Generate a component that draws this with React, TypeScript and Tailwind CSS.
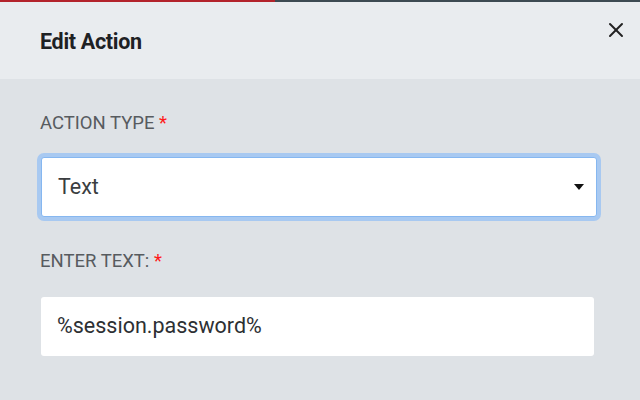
import { X } from "lucide-react";

const Label = ({ text }: { text: string }) => (
  <div className="h-6 text-[18.5px] leading-6 text-[#575b5f]">
    {text} <span className="text-[#ff1a1a]">*</span>
  </div>
);

export default function App() {
  return (
    <div
      className="w-[640px] h-[400px] overflow-hidden bg-[#dee2e6]"
      style={{ fontFamily: "Roboto, 'Noto Sans', sans-serif" }}
    >
      {/* progress line on top */}
      <div className="flex h-[2px]">
        <div className="w-[275px] bg-[#b3232b]" />
        <div className="flex-1 bg-[#3d4a52]" />
      </div>

      {/* header */}
      <div className="relative h-[77px] bg-[#e9ecef] flex items-center pl-10 pt-[3px]">
        <h2 className="text-[21.5px] font-bold text-[#1e2124] tracking-[-0.3px]">Edit Action</h2>
        <button className="absolute right-[12px] top-[16px] text-[#222]">
          <X size={24} strokeWidth={2} />
        </button>
      </div>

      {/* body */}
      <div className="pt-8 pl-10">
        <Label text="ACTION TYPE" />
        <div className="mt-[22px] w-[556px] h-[60px] ml-[1px] rounded-[3px] border border-[#86b7f0] ring-4 ring-[#a8c9f1] bg-white flex items-center justify-between pl-4 pr-[12px]">
          <span className="text-[21.5px] text-[#3a3d40]">Text</span>
          <svg width="10" height="6" viewBox="0 0 10 6">
            <path d="M0 0 L10 0 L5 6 Z" fill="#111" />
          </svg>
        </div>

        <div className="mt-8">
          <Label text="ENTER TEXT:" />
        </div>
        <div className="mt-6 w-[553px] h-[59px] ml-[1px] rounded-[3px] bg-white flex items-center pl-4">
          <span className="text-[21.5px] text-[#2d3033]">%session.password%</span>
        </div>
      </div>
    </div>
  );
}
